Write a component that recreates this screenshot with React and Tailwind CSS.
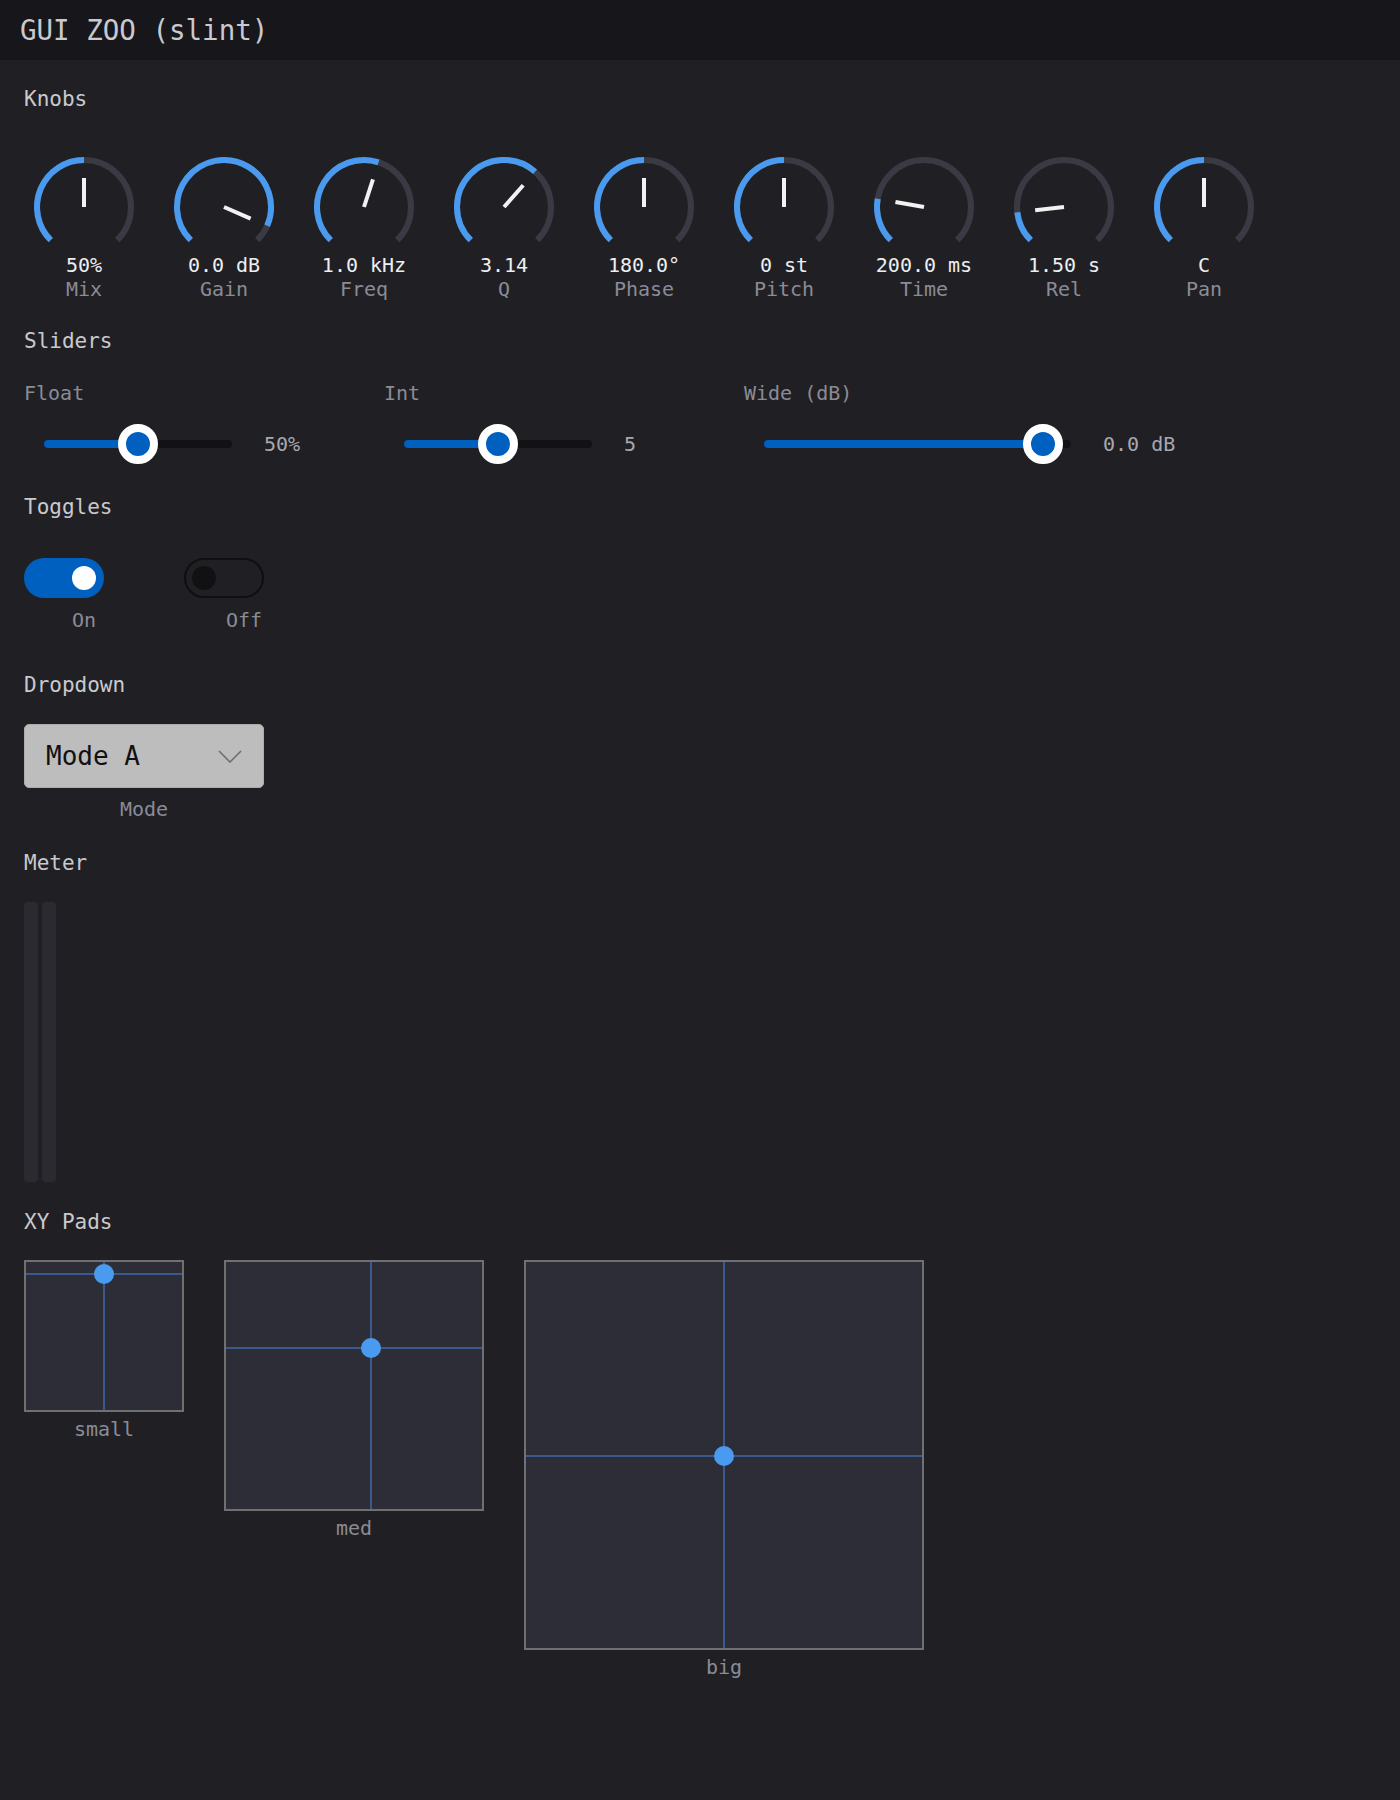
import React from "react";

/* ── knob geometry ─────────────────────────────────────────────── */
const CX = 52;
const CY = 52;
const R = 47;

const pt = (deg, r) => {
	const a = (deg * Math.PI) / 180;
	return [CX + r * Math.sin(a), CY - r * Math.cos(a)];
};

const arc = (from, to) => {
	const [x1, y1] = pt(from, R);
	const [x2, y2] = pt(to, R);
	const large = to - from > 180 ? 1 : 0;
	return `M ${x1} ${y1} A ${R} ${R} 0 ${large} 1 ${x2} ${y2}`;
};

const knobs = [
	{ label: "Mix", value: "50%", angle: 0 },
	{ label: "Gain", value: "0.0 dB", angle: 113.5 },
	{ label: "Freq", value: "1.0 kHz", angle: 18 },
	{ label: "Q", value: "3.14", angle: 41.5 },
	{ label: "Phase", value: "180.0°", angle: 0 },
	{ label: "Pitch", value: "0 st", angle: 0 },
	{ label: "Time", value: "200.0 ms", angle: -80 },
	{ label: "Rel", value: "1.50 s", angle: -96.5 },
	{ label: "Pan", value: "C", angle: 0 },
];

const Section = ({ children, className = "" }) => (
	<div className={`h-[24px] text-[21px] leading-[24px] text-[#c9c9ce] ${className}`}>
		{children}
	</div>
);

const Caption = ({ children, className = "" }) => (
	<div className={`h-[24px] whitespace-nowrap text-[20px] leading-[24px] text-[#8b8b95] ${className}`}>
		{children}
	</div>
);

const Knob = ({ label, value, angle }) => {
	const [px, py] = pt(angle, 29);
	return (
		<div className="flex w-[120px] flex-col items-center">
			<svg width="104" height="92" viewBox="0 0 104 92">
				<path d={arc(-135, 135)} fill="none" stroke="#3a3a44" strokeWidth="6" />
				<path d={arc(-135, angle)} fill="none" stroke="#4a9af0" strokeWidth="6" />
				<line x1={CX} y1={CY} x2={px} y2={py} stroke="#f2f2f2" strokeWidth="4" />
			</svg>
			<div className="mt-[6px] h-[24px] whitespace-nowrap text-[20px] leading-[24px] text-[#eeeef0]">
				{value}
			</div>
			<Caption>{label}</Caption>
		</div>
	);
};

/* ── slider ────────────────────────────────────────────────────── */
const Slider = ({ label, frac, track, trackW, value }) => (
	<div className="w-[360px] shrink-0">
		<Caption>{label}</Caption>
		<div className="mt-[19px] flex h-[40px] items-center pl-[20px]">
			<div className={`relative h-[8px] shrink-0 rounded-full bg-[#121214] ${track}`}>
				<div
					className="absolute left-0 top-0 h-[8px] rounded-full bg-[#0060c0]"
					style={{ width: frac * trackW }}
				/>
				<div
					className="absolute top-1/2 h-[40px] w-[40px] -translate-x-1/2 -translate-y-1/2 rounded-full border-[8px] border-white bg-[#0060c0]"
					style={{ left: frac * trackW }}
				/>
			</div>
			<div className="ml-[32px] shrink-0 whitespace-nowrap text-[20px] leading-[40px] text-[#a8a8b0]">
				{value}
			</div>
		</div>
	</div>
);

/* ── xy pad ────────────────────────────────────────────────────── */
const Pad = ({ size, width, x, y, label }) => (
	<div className={`flex flex-col items-center ${width}`}>
		<div className={`relative border-2 border-[#707070] bg-[#2d2d37] ${size}`}>
			<div className="absolute bottom-0 top-0 w-[2px] bg-[#3a5a8c]" style={{ left: x - 3 }} />
			<div className="absolute left-0 right-0 h-[2px] bg-[#3a5a8c]" style={{ top: y - 3 }} />
			<div
				className="absolute h-[20px] w-[20px] rounded-full bg-[#4a9af0]"
				style={{ left: x - 12, top: y - 12 }}
			/>
		</div>
		<Caption className="mt-[5px]">{label}</Caption>
	</div>
);

export default function App() {
	return (
		<div className="min-h-screen bg-[#202024] font-['DejaVu_Sans_Mono','Liberation_Mono',monospace]">
			{/* Header */}
			<div className="flex h-[60px] items-center bg-[#16161b] pl-[20px]">
				<span className="text-[27.5px] leading-[60px] text-[#c9c9ce]">GUI ZOO (slint)</span>
			</div>

			<div className="flex flex-col pl-[24px]">
				{/* Knobs */}
				<Section className="mt-[27px]">Knobs</Section>
				<div className="mt-[44px] flex gap-[20px]">
					{knobs.map((k) => (
						<Knob key={k.label} {...k} />
					))}
				</div>

				{/* Sliders */}
				<Section className="mt-[28px]">Sliders</Section>
				<div className="mt-[28px] flex">
					<Slider label="Float" frac={0.5} track="w-[188px]" trackW={188} value="50%" />
					<Slider label="Int" frac={0.5} track="w-[188px]" trackW={188} value="5" />
					<Slider label="Wide (dB)" frac={0.909} track="w-[307px]" trackW={307} value="0.0 dB" />
				</div>

				{/* Toggles */}
				<Section className="mt-[31px]">Toggles</Section>
				<div className="mt-[39px] flex gap-[40px]">
					<div className="flex w-[120px] flex-col">
						<div className="flex h-[40px] w-[80px] items-center justify-end rounded-full bg-[#0060c0] pr-[8px]">
							<div className="h-[24px] w-[24px] rounded-full bg-white" />
						</div>
						<Caption className="mt-[10px] text-center">On</Caption>
					</div>
					<div className="flex w-[120px] flex-col">
						<div className="flex h-[40px] w-[80px] items-center rounded-full border-2 border-[#0f0f12] pl-[6px]">
							<div className="h-[24px] w-[24px] rounded-full bg-[#111114]" />
						</div>
						<Caption className="mt-[10px] text-center">Off</Caption>
					</div>
				</div>

				{/* Dropdown */}
				<Section className="mt-[41px]">Dropdown</Section>
				<div className="mt-[27px] w-[240px]">
					<div className="flex h-[64px] items-center justify-between rounded-[5px] border border-[#acacac] bg-[#bdbdbd] pl-[21px] pr-[21px]">
						<span className="text-[26px] leading-[30px] text-[#111111]">Mode A</span>
						<svg width="24" height="13" viewBox="0 0 24 13">
							<path d="M1 1 L12 12 L23 1" fill="none" stroke="#6e6e6e" strokeWidth="1.6" />
						</svg>
					</div>
					<Caption className="mt-[9px] text-center">Mode</Caption>
				</div>

				{/* Meter */}
				<Section className="mt-[30px]">Meter</Section>
				<div className="mt-[27px] flex gap-[4px]">
					<div className="h-[280px] w-[14px] rounded-[4px] bg-[#2a2a30]" />
					<div className="h-[280px] w-[14px] rounded-[4px] bg-[#2a2a30]" />
				</div>

				{/* XY Pads */}
				<Section className="mt-[28px]">XY Pads</Section>
				<div className="mt-[26px] flex items-start gap-[40px]">
					<Pad size="h-[152px] w-[160px]" width="w-[160px]" x={80} y={14} label="small" />
					<Pad size="h-[251px] w-[260px]" width="w-[260px]" x={147} y={88} label="med" />
					<Pad size="h-[390px] w-[400px]" width="w-[400px]" x={200} y={196} label="big" />
				</div>
			</div>
		</div>
	);
}
